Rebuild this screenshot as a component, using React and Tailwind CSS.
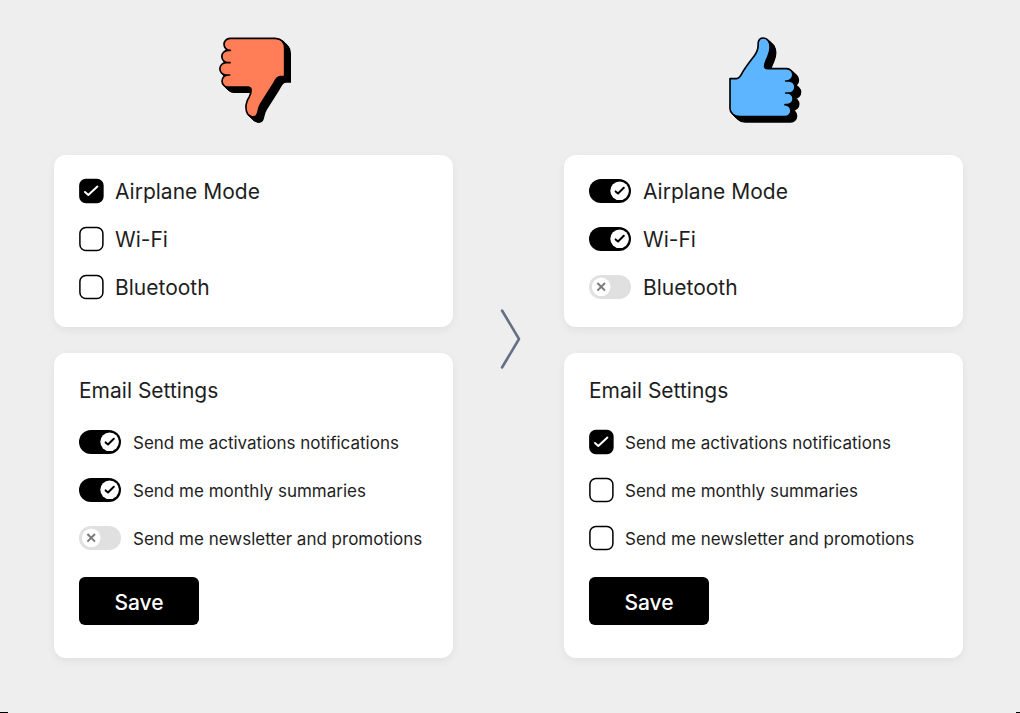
import { useId, useState } from "react";

const DEPTH = [17, 15, 13, 11, 9, 7, 5, 3];

const THUMB_DOWN =
  "M75 40H211Q239 42 239 70V155H226C215 155 211 166 205 177L167 237C158 252 161 262 155 271C149 279 134 276 128 267C118 249 124 228 133 215C139 204 142 187 130 186H69A18 18 0 0 1 69 150H74H63A18.500 18.500 0 0 1 63 113H75H69A18.500 18.500 0 0 1 69 76H76H75A18 18 0 0 1 75 40Z";

const THUMB_UP =
  "M45 161H64C74 160 76 154 82 143C92 126 106 108 117 94C134 73 128 60 130 50C134 36 152 36 160 47C168 60 165 80 159 94C155 104 148 116 149 126Q151 132 160 131H215A18.500 18.500 0 0 1 215 168H212H222A18 18 0 0 1 222 204H212H217A17.500 17.500 0 0 1 217 239H212H210A18 18 0 0 1 210 275H75Q61 275 53 267Q45 259 45 251Z";

function Thumb({ path, fill, label }) {
  return (
    <svg viewBox="24 33 243 264" className="h-[88px] w-[81px]" role="img" aria-label={label}>
      {DEPTH.map((d) => (
        <path key={d} d={path} transform={`translate(${d} ${d * 0.94})`} fill="#000" stroke="#000" strokeWidth="4" />
      ))}
      <path d={path} fill={fill} stroke="#000" strokeWidth="5" strokeLinejoin="round" />
    </svg>
  );
}

function Checkbox({ id, checked, onChange }) {
  return (
    <span className="relative h-6 w-6 shrink-0">
      <input id={id} type="checkbox" checked={checked} onChange={onChange} className="block h-6 w-6 appearance-none rounded-md" />
      <svg viewBox="0 0 24 24" className="pointer-events-none absolute inset-0 h-6 w-6 overflow-visible" fill="none" strokeLinecap="round" strokeLinejoin="round">
        <rect x="0.9" y="0.5" width="23" height="23" rx="6" fill={checked ? "#000" : "#fff"} stroke="#000" strokeWidth="1.5" />
        {checked && <path d="M6 13L9.3 16L18.4 7.6" stroke="#fff" strokeWidth="2" />}
      </svg>
    </span>
  );
}

function Toggle({ id, checked, onChange }) {
  return (
    <span className="relative h-6 w-[42px] shrink-0">
      <input
        id={id}
        type="checkbox"
        role="switch"
        checked={checked}
        onChange={onChange}
        className="block h-6 w-[42px] appearance-none rounded-full bg-[#e0e0e0] checked:bg-black"
      />
      <svg viewBox="0 0 42 24" className="pointer-events-none absolute inset-0 h-6 w-[42px]" fill="none" strokeLinecap="round" strokeLinejoin="round">
        <circle cx={checked ? 30.6 : 12.2} cy="11.8" r="9.3" fill="#fff" />
        {checked ? (
          <path d="M26.6 12.4L29 14.5L34.8 8.8" stroke="#000" strokeWidth="2" />
        ) : (
          <path d="M8.4 8L16 15.6M16 8L8.4 15.6" stroke="#7a7a7a" strokeWidth="2" strokeLinecap="butt" />
        )}
      </svg>
    </span>
  );
}

function Option({ control: Control, label, initial, large }) {
  const id = useId();
  const [checked, setChecked] = useState(initial);
  return (
    <div className="flex h-6 items-center gap-3">
      <Control id={id} checked={checked} onChange={(e) => setChecked(e.target.checked)} />
      <label htmlFor={id} className={large ? "pt-0.5 whitespace-nowrap text-[21px] leading-6" : "pt-0.5 whitespace-nowrap text-[17px] leading-6"}>
        {label}
      </label>
    </div>
  );
}

const CARD = "rounded-xl bg-white px-[25px] pt-6 shadow-[0_3px_8px_rgba(0,0,0,0.06)]";

function Example({ thumb, deviceControl, emailControl }) {
  return (
    <section className="flex flex-col">
      <div className="mb-[31px] flex justify-center">{thumb}</div>
      <div className={`${CARD} mb-[26px] flex flex-col gap-6 pb-7`}>
        <Option large control={deviceControl} label="Airplane Mode" initial={true} />
        <Option large control={deviceControl} label="Wi-Fi" initial={deviceControl === Toggle} />
        <Option large control={deviceControl} label="Bluetooth" initial={false} />
      </div>
      <form className={`${CARD} pb-[33px]`} onSubmit={(e) => e.preventDefault()}>
        <h2 className="text-[21px] leading-7">Email Settings</h2>
        <div className="mt-[25px] mb-[27px] flex flex-col gap-6">
          <Option control={emailControl} label="Send me activations notifications" initial={true} />
          <Option control={emailControl} label="Send me monthly summaries" initial={emailControl === Toggle} />
          <Option control={emailControl} label="Send me newsletter and promotions" initial={false} />
        </div>
        <button type="submit" className="h-12 w-[120px] rounded-md bg-black pt-1 text-[21px] leading-6 font-medium text-white">
          Save
        </button>
      </form>
    </section>
  );
}

export default function App() {
  return (
    <main className="flex min-h-screen flex-col justify-between bg-[#eeeeee] font-['Inter',sans-serif] text-[#1e1e1e]">
      <div className="grid grid-cols-[1fr_111px_1fr] pt-9 pr-[57px] pl-[54px]">
        <Example
          thumb={<Thumb path={THUMB_DOWN} fill="#ff7d57" label="Thumbs down" />}
          deviceControl={Checkbox}
          emailControl={Toggle}
        />
        <div className="flex justify-center pt-[271px]">
          <svg viewBox="0 0 25 64" className="h-16 w-[25px]" fill="none" stroke="#667085" strokeWidth="2.6" strokeLinecap="round" strokeLinejoin="round">
            <path d="M6 3.5L23 32L6 60.5" />
          </svg>
        </div>
        <Example
          thumb={<Thumb path={THUMB_UP} fill="#5eb5ff" label="Thumbs up" />}
          deviceControl={Toggle}
          emailControl={Checkbox}
        />
      </div>
      <div className="flex justify-between">
        <span className="h-px w-2 bg-black" />
        <span className="h-px w-1 bg-black" />
      </div>
    </main>
  );
}
